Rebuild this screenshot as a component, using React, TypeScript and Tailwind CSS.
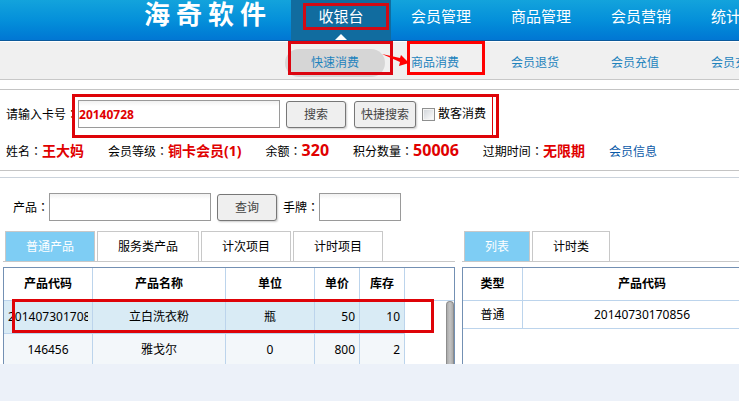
import type { ReactNode } from 'react';

const navItems = ['收银台', '会员管理', '商品管理', '会员营销', '统计分析'];
const subItems = ['快速消费', '商品消费', '会员退货', '会员充值', '会员充次'];

const products = [
  { code: '20140730170856', name: '立白洗衣粉', unit: '瓶', price: '50', stock: '10' },
  { code: '146456', name: '雅戈尔', unit: '0', price: '800', stock: '2' },
];

const inputClass =
  'h-7 border border-[#9a9a9a] bg-white bg-linear-to-b from-[#f1f1f1] to-white to-20% outline-none';

// Full-width colon, centred in its cell
function Colon() {
  return <span className="font-['Noto_Sans_CJK_TC',sans-serif]">：</span>;
}

function Header() {
  return (
    <header className="flex h-[41px] overflow-hidden border-b border-[#0b5a9c] bg-linear-to-b from-[#13a3dc] via-[#0590da] to-[#0176d3]">
      <h1 className="ml-36 mr-[25px] w-[122px] shrink-0 text-[26px] leading-7 font-bold text-white [text-align-last:justify]">
        海奇软件
      </h1>
      <nav className="flex shrink-0">
        {navItems.map((item, i) => (
          <a
            key={item}
            href="#"
            className={`flex w-[100px] flex-col items-center pt-1 text-[15px] leading-6 text-white ${i === 0 ? 'bg-[#116c9f]' : ''}`}
          >
            {item}
            {i === 0 && (
              <svg className="mt-1.5 shrink-0" width="12" height="6" viewBox="0 0 12 6" aria-hidden="true">
                <path d="M6 0l6 6H0z" fill="#fff" />
              </svg>
            )}
          </a>
        ))}
      </nav>
    </header>
  );
}

function SubNav() {
  return (
    <nav className="flex h-[39px] items-center overflow-hidden border-t border-b border-t-white border-b-[#c8c8c8] bg-[#f0f0f0] pl-[285px] pt-1">
      {subItems.map((item, i) => (
        <a
          key={item}
          href="#"
          className={`w-[100px] shrink-0 rounded-full text-center leading-7 text-[#1e83bd] ${i === 0 ? 'bg-[#d6d6d6]' : ''}`}
        >
          {item}
        </a>
      ))}
    </nav>
  );
}

function Btn({ children, wide }: { children: ReactNode; wide?: boolean }) {
  return (
    <button
      type="button"
      className={`h-[27px] rounded-[3px] border border-[#777] bg-[#efefef] pt-0.5 text-[#444] shadow-[1px_1px_2px_#ccc] ${wide ? 'w-[62px]' : 'w-[60px]'}`}
    >
      {children}
    </button>
  );
}

function Info({ label, value, digits }: { label: string; value: string; digits?: boolean }) {
  return (
    <div className="flex items-baseline">
      <dt>
        {label}
        <Colon />
      </dt>
      <dd className={`font-bold text-[#e00000] ${digits ? 'text-base' : 'text-sm'}`}>{value}</dd>
    </div>
  );
}

function MemberPanel() {
  return (
    <section className="mt-[9px] border-y border-[#c4c4c4] px-1.5 pt-2.5 pb-2">
      <div className="flex items-center">
        <label htmlFor="card">
          请输入卡号
          <Colon />
        </label>
        <input
          id="card"
          defaultValue="20140728"
          className={`${inputClass} w-[202px] font-bold text-[#e00000]`}
        />
        <div className="ml-1.5 flex gap-2">
          <Btn>搜索</Btn>
          <Btn wide>快捷搜索</Btn>
        </div>
        <input
          id="guest"
          type="checkbox"
          className="mr-[3px] ml-1.5 size-[13px] appearance-none border border-[#8e8f8f] bg-linear-to-br from-[#cfd3d8] to-white shadow-[inset_0_0_0_1px_#f4f4f4]"
        />
        <label htmlFor="guest">散客消费</label>
      </div>
      <dl className="mt-2.5 flex h-6 items-baseline gap-6 whitespace-nowrap">
        <Info label="姓名" value="王大妈" />
        <Info label="会员等级" value="铜卡会员(1)" />
        <Info label="余额" value="320" digits />
        <Info label="积分数量" value="50006" digits />
        <Info label="过期时间" value="无限期" />
        <a href="#" className="text-[#0b5aa8]">
          会员信息
        </a>
      </dl>
    </section>
  );
}

function Tabs({ items }: { items: string[] }) {
  return (
    <div role="tablist" className="flex gap-0.5 border-b border-[#c8c8c8] pl-0.5">
      {items.map((item, i) => (
        <button
          key={item}
          type="button"
          role="tab"
          aria-selected={i === 0}
          className={`h-[30px] border border-b-0 border-[#c8c8c8] px-5 ${i === 0 ? 'bg-[#7ecdf4] text-white' : 'bg-white'}`}
        >
          {item}
        </button>
      ))}
    </div>
  );
}

const line = 'border-[#bcd4ec]';

function ProductTable() {
  return (
    <div className="mt-[5px] flex h-[97px] overflow-hidden border border-b-0 border-[#7390b3]">
      <table className="w-[401px] table-fixed border-separate border-spacing-0 text-center">
        <colgroup>
          <col className="w-[89px]" />
          <col className="w-[133px]" />
          <col className="w-[89px]" />
          <col className="w-[45px]" />
          <col className="w-[45px]" />
        </colgroup>
        <thead>
          <tr className="h-[33px]">
            {['产品代码', '产品名称', '单位', '单价', '库存'].map((h) => (
              <th key={h} className={`border-r border-b ${line}`}>
                {h}
              </th>
            ))}
          </tr>
        </thead>
        <tbody>
          {products.map((p, i) => (
            <tr key={p.code} className={`h-[33px] ${i === 0 ? 'bg-[#d9ebf5]' : 'bg-[#f3f7fa]'}`}>
              <td className={`border-r border-b px-1 ${line}`}>
                <div className="overflow-hidden whitespace-nowrap">{p.code}</div>
              </td>
              <td className={`border-r border-b ${line}`}>{p.name}</td>
              <td className={`border-r border-b ${line}`}>{p.unit}</td>
              <td className={`border-r border-b pr-1 text-right ${line}`}>{p.price}</td>
              <td className={`border-r border-b pr-1 text-right ${line}`}>{p.stock}</td>
            </tr>
          ))}
        </tbody>
      </table>
      <div className="flex grow flex-col items-end">
        <div className={`h-[33px] w-full shrink-0 border-b ${line}`} />
        <div className="w-2 grow rounded-t-full border border-b-0 border-[#8d8d8d] bg-linear-to-r from-[#aaa] via-[#c4c4c4] to-[#aaa]" />
      </div>
    </div>
  );
}

function ListTable() {
  return (
    <div className="mt-[5px] h-[97px] overflow-hidden border-t border-l border-[#7390b3]">
      <table className="w-[298px] table-fixed border-separate border-spacing-0 text-center">
        <colgroup>
          <col className="w-[60px]" />
          <col className="w-[238px]" />
        </colgroup>
        <thead>
          <tr className="h-[33px]">
            <th className={`border-r border-b ${line}`}>类型</th>
            <th className={`border-b ${line}`}>产品代码</th>
          </tr>
        </thead>
        <tbody>
          <tr className="h-7">
            <td className={`border-r border-b ${line}`}>普通</td>
            <td className={`border-b ${line}`}>20140730170856</td>
          </tr>
        </tbody>
      </table>
    </div>
  );
}

function ProductSection() {
  return (
    <section className="mt-1.5 border-t border-[#cbd3dc] pt-[15px]">
      <div className="flex items-center pl-[13px]">
        <label htmlFor="product">
          产品
          <Colon />
        </label>
        <input id="product" className={`${inputClass} mr-1.5 w-[162px]`} />
        <Btn>查询</Btn>
        <label htmlFor="tag" className="ml-1.5">
          手牌
          <Colon />
        </label>
        <input id="tag" className={`${inputClass} w-[82px]`} />
      </div>
      <div className="mt-2.5 flex gap-[7px] pl-[3px]">
        <div className="w-[452px] shrink-0">
          <Tabs items={['普通产品', '服务类产品', '计次项目', '计时项目']} />
          <ProductTable />
        </div>
        <div className="min-w-0 grow">
          <Tabs items={['列表', '计时类']} />
          <ListTable />
        </div>
      </div>
    </section>
  );
}

// Red step markers drawn over the screen
function Marks() {
  return (
    <div className="pointer-events-none">
      <div className="absolute top-[3px] left-[303px] h-[27px] w-[86px] border-3 border-[#d20a14]" />
      <div className="absolute top-[41px] left-[288px] h-[34px] w-[105px] border-3 border-[#dc0510]" />
      <div className="absolute top-[41px] left-[407px] h-[34px] w-[78px] border-3 border-[#ff0000]" />
      <div className="absolute top-[94px] left-[72px] h-[44px] w-[427px] border-3 border-[#de0308]" />
      <div className="absolute top-[97px] left-[492px] h-[38px] w-px bg-[#de0308]" />
      <div className="absolute top-[299px] left-[12px] h-[34px] w-[422px] border-3 border-[#de0308]" />
      <svg className="absolute top-[50px] left-[380px]" width="32" height="20" viewBox="0 0 32 20" aria-hidden="true">
        <path d="M2 4l18 4 1-3 8 8-10 3 1-4z" fill="#f00" />
      </svg>
    </div>
  );
}

export default function App() {
  return (
    <div className="relative min-h-screen overflow-hidden bg-[#ecf1f9] font-['Noto_Sans','Noto_Sans_CJK_SC',sans-serif] text-xs text-black">
      <Header />
      <SubNav />
      <main className="flow-root bg-white">
        <MemberPanel />
        <ProductSection />
      </main>
      <Marks />
    </div>
  );
}
